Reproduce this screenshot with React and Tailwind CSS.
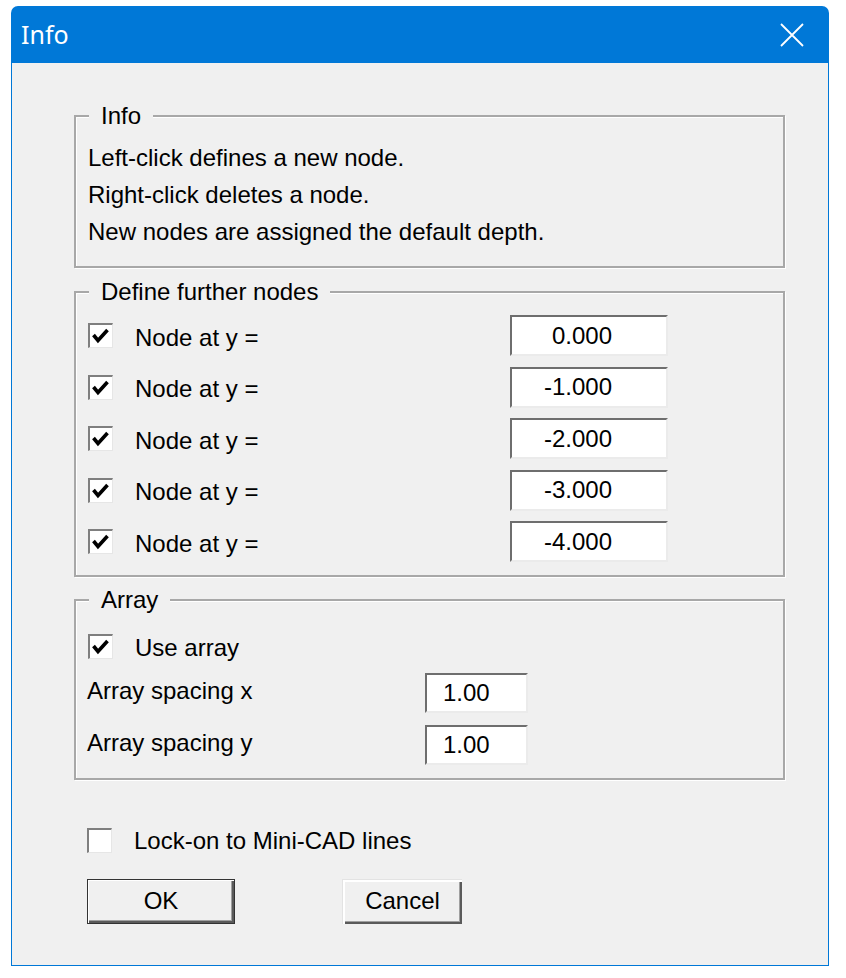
import React from "react";

function Check({ checked }) {
  return (
    <div className="relative w-[25px] h-[25px] shrink-0 bg-white border-t-2 border-l-2 border-b border-r border-[#7f7f7f] border-b-[#e6e6e6] border-r-[#e6e6e6]">
      {checked && (
        <svg className="absolute left-0 top-0" width="22" height="22" viewBox="0 0 22 22">
          <path d="M3.5 10 L8 15.5 L17.5 5" fill="none" stroke="#000" strokeWidth="3.6" strokeLinejoin="miter" />
        </svg>
      )}
    </div>
  );
}

function NodeRow({ value }) {
  return (
    <div className="flex items-center h-[41px]">
      <Check checked />
      <div className="ml-[22px] w-[375px] pt-[4px]">Node at y =</div>
      <div className="h-[41px] w-[158px] bg-white border-2 border-[#6e6e6e] border-b-[#ebebeb] border-r-[#ebebeb] flex items-center justify-end pr-[54px]">
        {value}
      </div>
    </div>
  );
}

function Legend({ children }) {
  return (
    <div className="absolute top-[-13px] left-[13px] px-[12px] bg-[#f0f0f0] leading-[24px]">
      {children}
    </div>
  );
}

export default function App() {
  return (
    <div className="w-[846px] h-[978px] bg-white overflow-hidden font-['Liberation_Sans',Arial,sans-serif] text-[24px] text-black">
      <div className="ml-[11px] mt-[6px] w-[818px] h-[960px] flex flex-col">
        <div className="h-[57px] shrink-0 bg-[#0078d7] rounded-t-[7px] flex items-center justify-between pl-[10px] pr-[25px]">
          <span className="font-['Noto_Sans',sans-serif] text-[25px] text-white leading-none">Info</span>
          <svg width="24" height="24" viewBox="0 0 24 24">
            <path d="M1 1 L23 23 M23 1 L1 23" stroke="#fff" strokeWidth="1.8" fill="none" />
          </svg>
        </div>
        <div className="flex-1 bg-[#f0f0f0] border-l border-r border-b border-[#0078d7] pl-[62px] pt-[52px]">
          {/* Info group */}
          <div className="relative w-[711px] h-[153px] border-2 border-[#a8a8a8] shadow-[inset_1px_1px_0_#ffffff,1px_1px_0_#ffffff] pl-[12px] pt-[22px] leading-[37px]">
            <Legend>Info</Legend>
            <div>Left-click defines a new node.</div>
            <div>Right-click deletes a node.</div>
            <div>New nodes are assigned the default depth.</div>
          </div>

          {/* Define further nodes */}
          <div className="relative mt-[23px] w-[711px] h-[286px] border-2 border-[#a8a8a8] shadow-[inset_1px_1px_0_#ffffff,1px_1px_0_#ffffff] pl-[12px] pt-[22px] flex flex-col gap-[10.5px]">
            <Legend>Define further nodes</Legend>
            <NodeRow value="0.000" />
            <NodeRow value="-1.000" />
            <NodeRow value="-2.000" />
            <NodeRow value="-3.000" />
            <NodeRow value="-4.000" />
          </div>

          {/* Array */}
          <div className="relative mt-[22px] w-[711px] h-[181px] border-2 border-[#a8a8a8] shadow-[inset_1px_1px_0_#ffffff,1px_1px_0_#ffffff] pl-[11px] pt-[32px]">
            <Legend>Array</Legend>
            <div className="flex items-center h-[26px] ml-[1px]">
              <Check checked />
              <div className="ml-[22px] pt-[3px]">Use array</div>
            </div>
            <div className="flex items-center h-[40px] mt-[14px]">
              <div className="w-[338px] pb-[4px]">Array spacing x</div>
              <div className="h-[40px] w-[103px] bg-white border-2 border-[#6e6e6e] border-b-[#ebebeb] border-r-[#ebebeb] flex items-center pl-[16px]">
                1.00
              </div>
            </div>
            <div className="flex items-center h-[40px] mt-[12px]">
              <div className="w-[338px] pb-[4px]">Array spacing y</div>
              <div className="h-[40px] w-[103px] bg-white border-2 border-[#6e6e6e] border-b-[#ebebeb] border-r-[#ebebeb] flex items-center pl-[16px]">
                1.00
              </div>
            </div>
          </div>

          {/* Lock-on */}
          <div className="flex items-center h-[26px] mt-[47px] ml-[13px]">
            <Check checked={false} />
            <div className="ml-[22px] pt-[2px]">Lock-on to Mini-CAD lines</div>
          </div>

          {/* Buttons */}
          <div className="flex mt-[26px] ml-[13px]">
            <div className="w-[148px] h-[45px] border border-[#333333] bg-[#f0f0f0] shadow-[inset_1px_1px_0_#ffffff,inset_-2px_-2px_0_#5a5a5a,inset_-3px_-3px_0_#a0a0a0] flex items-center justify-center pb-[2px]">
              OK
            </div>
            <div className="ml-[107px] w-[120px] h-[45px] bg-[#f0f0f0] border-t border-l border-[#e3e3e3] shadow-[inset_2px_2px_0_#ffffff,inset_-2px_-2px_0_#5a5a5a,inset_-3px_-3px_0_#a0a0a0] flex items-center justify-center pb-[2px]">
              Cancel
            </div>
          </div>
        </div>
      </div>
    </div>
  );
}
